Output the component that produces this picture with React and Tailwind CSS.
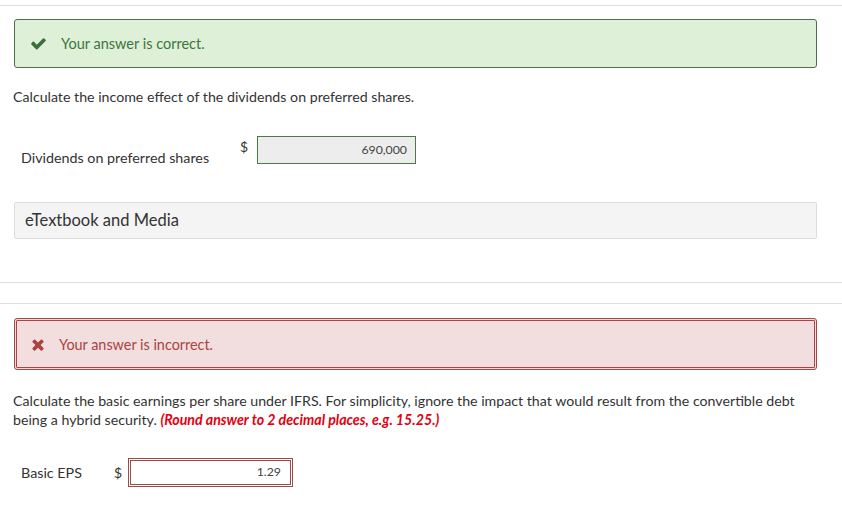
import React from "react";

function CheckIcon() {
  return (
    <svg viewBox="0 0 1792 1792" className="h-[17px] w-[17px] fill-[#3a6f3c]">
      <path d="M1671 566q0 40-28 68l-724 724-136 136q-28 28-68 28t-68-28l-136-136-362-362q-28-28-28-68t28-68l136-136q28-28 68-28t68 28l294 295 656-657q28-28 68-28t68 28l136 136q28 28 28 68z" />
    </svg>
  );
}

function TimesIcon() {
  return (
    <svg viewBox="0 0 1408 1792" className="h-[17px] w-[14px] fill-[#a94442]">
      <path d="M1298 1322q0 40-28 68l-136 136q-28 28-68 28t-68-28l-294-294-294 294q-28 28-68 28t-68-28l-136-136q-28-28-28-68t28-68l294-294-294-294q-28-28-28-68t28-68l136-136q28-28 68-28t68 28l294 294 294-294q28-28 68-28t68 28l136 136q28 28 28 68t-28 68l-294 294 294 294q28 28 28 68z" />
    </svg>
  );
}

export default function App() {
  return (
    <div className="min-h-[508px] bg-white font-['Lato','Liberation_Sans',sans-serif] text-[#333]">
      <div className="pt-[5px]">
        <div className="border-t border-[#dddddd]" />
      </div>

      <div className="pl-[14px] pr-[25px]">
        <div className="mt-[13px] flex h-[49px] items-center rounded-[3px] border border-[#4e7049] bg-[#dff0d8] pl-[15px]">
          <CheckIcon />
          <span className="ml-[14px] text-[14.5px] text-[#3c763d]">Your answer is correct.</span>
        </div>
      </div>

      <p className="mt-[19px] pl-[13px] text-[14.2px] leading-[20px]">
        Calculate the income effect of the dividends on preferred shares.
      </p>

      <div className="mt-[29px] flex items-start pl-[21px]">
        <span className="mt-[13px] w-[219px] text-[14.3px] leading-[17px]">Dividends on preferred shares</span>
        <span className="mt-[3px] w-[17px] text-[14px] leading-[16px]">$</span>
        <div className="flex h-[28px] w-[159px] items-center justify-end border border-[#4b7a47] bg-[#ededed] pr-[8px] text-[12.3px] text-[#444]">
          690,000
        </div>
      </div>

      <div className="pl-[14px] pr-[25px]">
        <div className="mt-[36px] flex h-[37px] items-center rounded-[2px] border border-[#dcdcdc] bg-[#f4f4f4] pl-[10px] text-[16.5px] text-[#333]">
          eTextbook and Media
        </div>
      </div>

      <div className="mt-[43px] border-t border-[#dddddd]" />
      <div className="mt-[20px] border-t border-[#dddddd]" />

      <div className="pl-[14px] pr-[25px]">
        <div className="mt-[14px] flex h-[52px] items-center rounded-[3px] border-[3px] border-double border-[#a94442] bg-[#f2dede] pl-[14px]">
          <TimesIcon />
          <span className="ml-[14px] pt-[2px] text-[14.4px] text-[#a94442]">Your answer is incorrect.</span>
        </div>
      </div>

      <p className="mt-[21px] pl-[13px] pr-[30px] text-[14.2px] leading-[19px]">
        Calculate the basic earnings per share under IFRS. For simplicity, ignore the impact that would result from the convertible debt
        being a hybrid security.{" "}
        <span className="font-bold italic text-[#e4000f]">(Round answer to 2 decimal places, e.g. 15.25.)</span>
      </p>

      <div className="mt-[29px] flex items-center pl-[21px]">
        <span className="w-[93px] text-[14.3px] leading-[17px]">Basic EPS</span>
        <span className="w-[14px] text-[14px] leading-[16px]">$</span>
        <div className="flex h-[29px] w-[165px] items-center justify-end border-[3px] border-double border-[#9b4a45] bg-white pr-[9px] text-[12.3px] text-[#444]">
          1.29
        </div>
      </div>
    </div>
  );
}
